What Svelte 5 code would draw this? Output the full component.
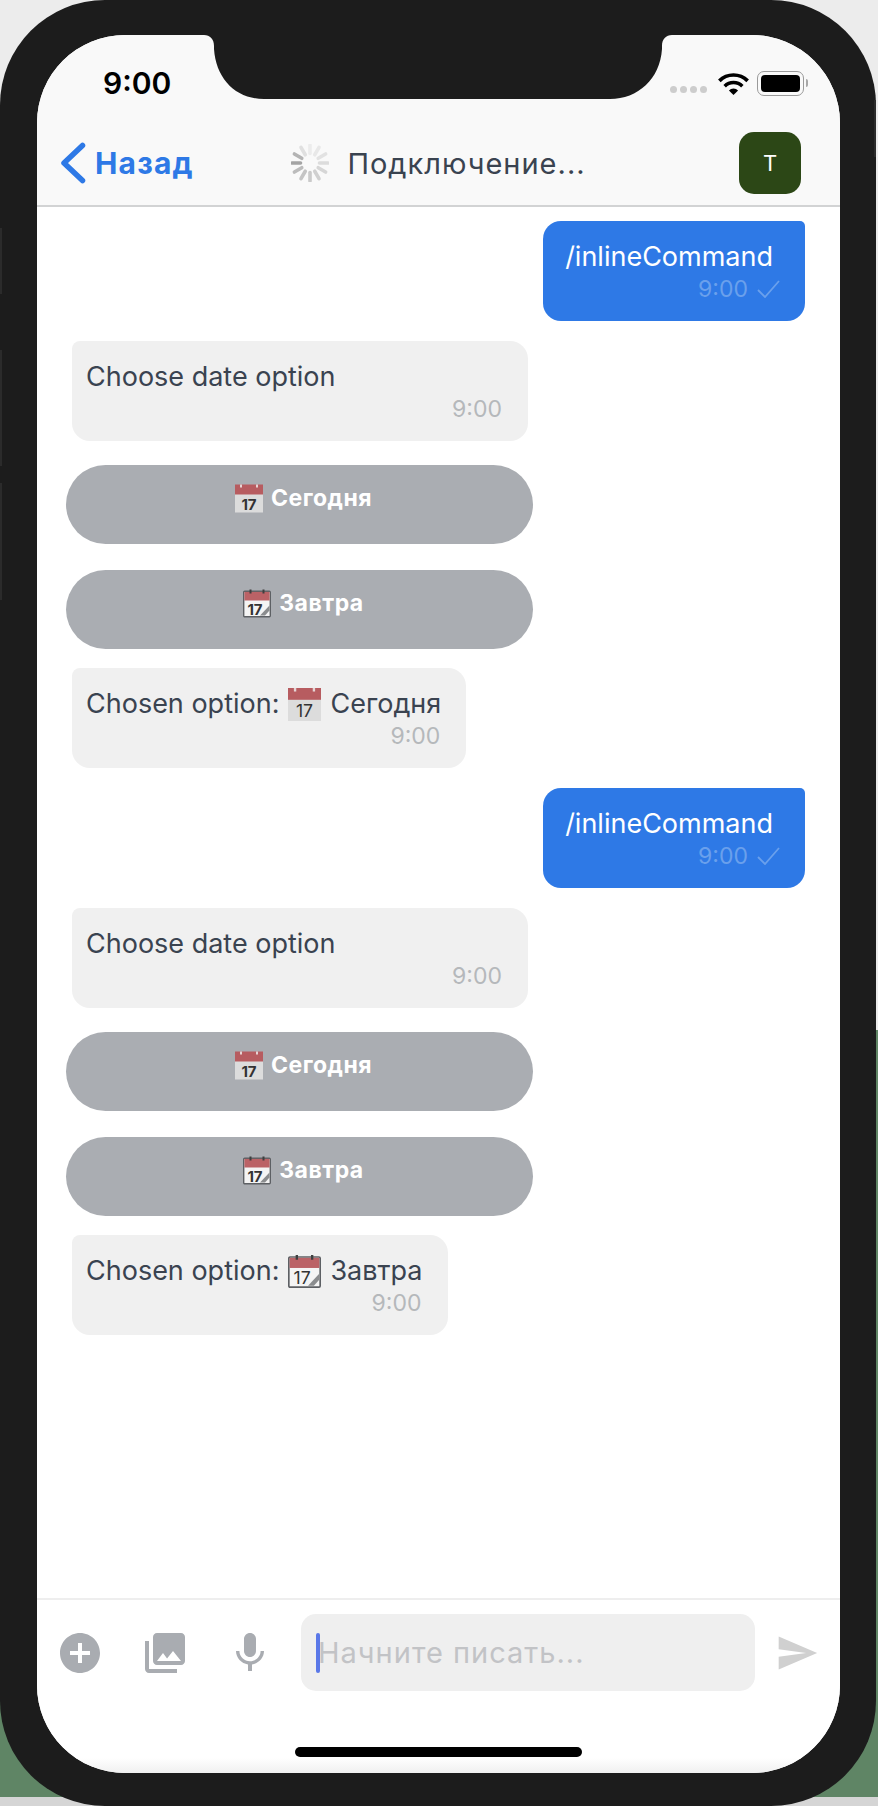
<script>
  const bot = "Choose date option";
  const conversations = [
    { choice: "Сегодня", cal: "plain" },
    { choice: "Завтра", cal: "torn" }
  ];
  const spokes = Array.from({ length: 12 }, (_, i) => i);
  // darkest spoke sits at about 9 o'clock, fades going clockwise
  const spokeColor = (i) => ["#ececec", "#e8e8e8", "#e2e2e2", "#dcdcdc", "#d6d6d6", "#d0d0d0", "#cacaca", "#c4c4c4", "#bcbcbc", "#a4a4a4", "#b4b4b4", "#e0e0e0"][i];
</script>

{#snippet calendar(kind)}
  <svg class="cal" viewBox="0 0 28 28">
    {#if kind === "plain"}
      <rect y="8" width="28" height="20" fill="#dcdcdc" />
      <rect y="0" width="28" height="10" fill="#b75c60" />
      <rect x="5" y="0" width="2" height="3" fill="#e6d5d5" />
      <rect x="21" y="0" width="2" height="3" fill="#e6d5d5" />
      <text x="14" y="25" text-anchor="middle" class="cal-num">17</text>
    {:else}
      <rect x="0.7" y="1.7" width="26.6" height="25.6" rx="1" fill="#f4f4f4" stroke="#5d6064" stroke-width="1.4" />
      <rect x="1.4" y="2.4" width="25.2" height="8.6" fill="#bb6266" />
      <rect x="6.5" y="0" width="2" height="4" fill="#3f3f3f" />
      <rect x="19.5" y="0" width="2" height="4" fill="#3f3f3f" />
      <text x="12" y="25" text-anchor="middle" class="cal-num">17</text>
      <path d="M17 26 L26.5 16 L26.5 21 L22 26 Z" fill="#8a8c8e" />
    {/if}
  </svg>
{/snippet}

<div class="page">
  <div class="phone">
    <i class="side" style="top:228px;height:66px"></i>
    <i class="side" style="top:350px;height:116px"></i>
    <i class="side" style="top:483px;height:117px"></i>
    <i class="side right" style="top:100px;height:57px"></i>

    <div class="screen">
      <svg class="notch" viewBox="0 0 468 64">
        <path d="M0 0C6 0 10 4 10 11V14C12 44 32 64 60 64H406C434 64 456 44 458 14V11C458 4 462 0 468 0Z" fill="#1c1c1c" />
      </svg>

      <header>
        <div class="status">
          <span class="clock">9:00</span>
          <div class="status-right">
            <div class="dots"><i></i><i></i><i></i><i></i></div>
            <svg class="wifi" viewBox="0 0 33 24">
              <path d="M16.500 24L11.900 19.400A6.500 6.500 0 0 1 21.100 19.400Z" fill="#000" />
              <path d="M7.660 15.160A12.500 12.500 0 0 1 25.340 15.160" fill="none" stroke="#000" stroke-width="3.500" />
              <path d="M2.360 9.860A20 20 0 0 1 30.640 9.860" fill="none" stroke="#000" stroke-width="3.700" />
            </svg>
            <div class="battery"><div class="charge"></div></div>
            <i class="nub"></i>
          </div>
        </div>
        <div class="nav">
          <div class="back">
            <svg width="26" height="42" viewBox="0 0 26 42">
              <path d="M22.500 3.500L4 21L22.500 38.500" fill="none" stroke="#2e79e6" stroke-width="5.500" stroke-linecap="round" stroke-linejoin="round" />
            </svg>
            <span>Назад</span>
          </div>
          <div class="title">
            <svg width="38" height="38" viewBox="-19 -19 38 38">
              {#each spokes as i}
                <line x1="0" y1="-9.500" x2="0" y2="-18" stroke={spokeColor(i)} stroke-width="3.600" stroke-linecap="round" transform="rotate({i * 30})" />
              {/each}
            </svg>
            <span>Подключение...</span>
          </div>
          <div class="avatar">T</div>
        </div>
      </header>

      <main>
        {#each conversations as c}
          <div class="bubble mine">
            <div class="text">/inlineCommand</div>
            <div class="meta">
              <span>9:00</span>
              <svg width="23" height="18" viewBox="0 0 23 18"><path d="M1 10L8 17L22 1" fill="none" stroke="#6aa0ec" stroke-width="1.800" /></svg>
            </div>
          </div>
          <div class="bubble theirs wide">
            <div class="text">{bot}</div>
            <div class="meta">9:00</div>
          </div>
          <div class="keyboard">
            <button>{@render calendar("plain")}<span>Сегодня</span></button>
            <button>{@render calendar("torn")}<span>Завтра</span></button>
          </div>
          <div class="bubble theirs">
            <div class="text chosen">Chosen option: {@render calendar(c.cal)} {c.choice}</div>
            <div class="meta">9:00</div>
          </div>
        {/each}
      </main>

      <footer>
        <div class="composer">
          <svg class="tool" viewBox="0 0 24 24"><path d="M12 2C6.480 2 2 6.480 2 12s4.480 10 10 10 10-4.480 10-10S17.520 2 12 2zm5 11h-4v4h-2v-4H7v-2h4V7h2v4h4v2z" /></svg>
          <svg class="tool" viewBox="0 0 24 24"><path d="M22 16V4c0-1.100-.9-2-2-2H8c-1.100 0-2 .9-2 2v12c0 1.100.9 2 2 2h12c1.100 0 2-.9 2-2zm-11-4l2.030 2.710L16 11l4 5H8l3-4zM2 6v14c0 1.100.9 2 2 2h14v-2H4V6H2z" /></svg>
          <svg class="tool" viewBox="0 0 24 24"><path d="M12 14c1.660 0 2.990-1.340 2.990-3L15 5c0-1.660-1.340-3-3-3S9 3.340 9 5v6c0 1.660 1.340 3 3 3zm5.300-3c0 3-2.540 5.100-5.300 5.100S6.700 14 6.700 11H5c0 3.410 2.720 6.230 6 6.720V21h2v-3.280c3.280-.48 6-3.300 6-6.720h-1.700z" /></svg>
          <div class="input"><i class="caret"></i><span>Начните писать...</span></div>
          <svg class="send" viewBox="0 0 24 24"><path d="M2.010 21L23 12 2.010 3 2 10l15 2-15 2z" /></svg>
        </div>
        <div class="home"></div>
      </footer>
    </div>
  </div>
</div>

<style>
  :global(body) {
    margin: 0;
  }
  .page {
    height: 1806px;
    overflow: hidden;
    font-family: Inter, "Noto Sans", sans-serif;
    background: linear-gradient(#ececec 0 1030px, #5f8565 1030px 1797px, #d5d5d5 1797px);
  }
  .phone {
    position: relative;
    box-sizing: border-box;
    width: 876px;
    height: 1806px;
    padding: 35px 36px 33px 37px;
    background: #1c1c1c;
    border-radius: 105px;
  }
  .side {
    position: absolute;
    left: 0;
    width: 2px;
    background: #2b2b2b;
  }
  .side.right {
    left: auto;
    right: 0;
  }
  .screen {
    position: relative;
    display: flex;
    flex-direction: column;
    height: 100%;
    background: #fff;
    border-radius: 88px;
    overflow: hidden;
  }
  .notch {
    position: absolute;
    left: 167px;
    top: 0;
    width: 468px;
    height: 64px;
  }

  header {
    background: #f9f9f9;
    border-bottom: 2px solid #d2d3d4;
  }
  .status {
    display: flex;
    justify-content: space-between;
    align-items: center;
    box-sizing: border-box;
    height: 64px;
    padding: 32px 32px 0 66px;
  }
  .clock {
    font-size: 30px;
    font-weight: 600;
    color: #000;
  }
  .status-right {
    display: flex;
    align-items: center;
  }
  .dots {
    display: flex;
    gap: 3px;
    margin: 13px 10px 0 0;
  }
  .dots i {
    width: 7px;
    height: 7px;
    border-radius: 50%;
    background: #cdcdcd;
  }
  .wifi {
    width: 33px;
    height: 24px;
    margin-right: 7px;
  }
  .battery {
    box-sizing: border-box;
    width: 47px;
    height: 25px;
    padding: 3px;
    border: 1.500px solid #9a9a9a;
    border-radius: 7px;
  }
  .charge {
    height: 100%;
    background: #000;
    border-radius: 4px;
  }
  .nub {
    width: 2px;
    height: 8px;
    margin-left: 2px;
    background: #a8a8a8;
    border-radius: 0 2px 2px 0;
  }
  .nav {
    display: grid;
    grid-template-columns: 1fr auto 1fr;
    align-items: center;
    padding: 33px 39px 11px;
  }
  .back {
    display: flex;
    align-items: center;
    gap: 9px;
    margin-left: -16px;
    font-size: 30px;
    font-weight: 700;
    letter-spacing: 1.200px;
    color: #2e79e6;
  }
  .title {
    display: flex;
    align-items: center;
    gap: 18px;
    font-size: 29px;
    letter-spacing: 1px;
    color: #3a4350;
  }
  .avatar {
    justify-self: end;
    display: flex;
    align-items: center;
    justify-content: center;
    width: 62px;
    height: 62px;
    border-radius: 15px;
    background: #2c4716;
    color: #fff;
    font-size: 22px;
  }

  main {
    flex: 1;
    display: flex;
    flex-direction: column;
    align-items: flex-start;
    gap: 20px;
    padding: 14px 35px 0;
  }
  .bubble {
    box-sizing: border-box;
    height: 100px;
    padding: 20px 25px 0 14px;
    border-radius: 8px 18px 18px 18px;
    background: #f0f0f0;
    font-size: 27px;
    color: #3a4350;
  }
  .wide {
    width: 456px;
  }
  .wide .meta {
    margin-right: 1px;
  }
  .text {
    height: 32px;
    line-height: 32px;
    white-space: nowrap;
  }
  .chosen {
    display: flex;
    align-items: center;
    gap: 9px;
  }
  .chosen .cal {
    width: 33px;
    height: 33px;
  }
  .meta {
    display: flex;
    justify-content: flex-end;
    align-items: center;
    gap: 9px;
    height: 32px;
    margin-right: 1px;
    font-size: 23px;
    color: #b5b8bb;
  }
  .mine {
    align-self: flex-end;
    padding: 20px 25px 0 22px;
    border-radius: 18px 5px 18px 18px;
    background: #2e79e6;
    color: #fff;
  }
  .mine .text {
    margin-right: 7px;
  }
  .mine .meta {
    margin-right: 0;
    color: #6aa0ec;
  }
  .keyboard {
    display: flex;
    flex-direction: column;
    gap: 26px;
    margin: 4px 0 -1px -6px;
  }
  button {
    display: flex;
    align-items: center;
    justify-content: center;
    gap: 8px;
    width: 467px;
    height: 79px;
    padding: 0 0 13px 8px;
    border: 0;
    border-radius: 40px;
    background: #aaadb2;
    color: #fff;
    font-family: inherit;
    font-size: 23px;
    font-weight: 700;
    letter-spacing: 0.500px;
  }
  .cal {
    width: 28px;
    height: 29px;
  }
  .cal-num {
    font-size: 15px;
    font-family: Inter, sans-serif;
    letter-spacing: 0;
    fill: #333;
  }

  footer {
    background: linear-gradient(#fff 160px, #f0f0f0);
    display: flex;
    flex-direction: column;
    align-items: center;
  }
  .composer {
    align-self: stretch;
    display: flex;
    align-items: center;
    gap: 37px;
    padding: 14px 21px 0 19px;
    border-top: 2px solid #eee;
  }
  .tool {
    flex: none;
    width: 48px;
    height: 48px;
    fill: #a9acb1;
  }
  .input {
    flex: 1;
    display: flex;
    align-items: center;
    height: 77px;
    margin-left: -10px;
    padding-left: 15px;
    border-radius: 15px;
    background: #efefef;
    color: #c2c3c6;
    font-size: 29px;
    letter-spacing: 1px;
  }
  .caret {
    width: 4px;
    height: 40px;
    margin-right: -2px;
    border-radius: 2px;
    background: #5a78e8;
  }
  .send {
    flex: none;
    width: 44px;
    height: 44px;
    margin-left: -17px;
    fill: #d0d0d0;
  }
  .home {
    width: 287px;
    height: 10px;
    margin: 56px 0 16px;
    border-radius: 5px;
    background: #000;
  }
</style>
